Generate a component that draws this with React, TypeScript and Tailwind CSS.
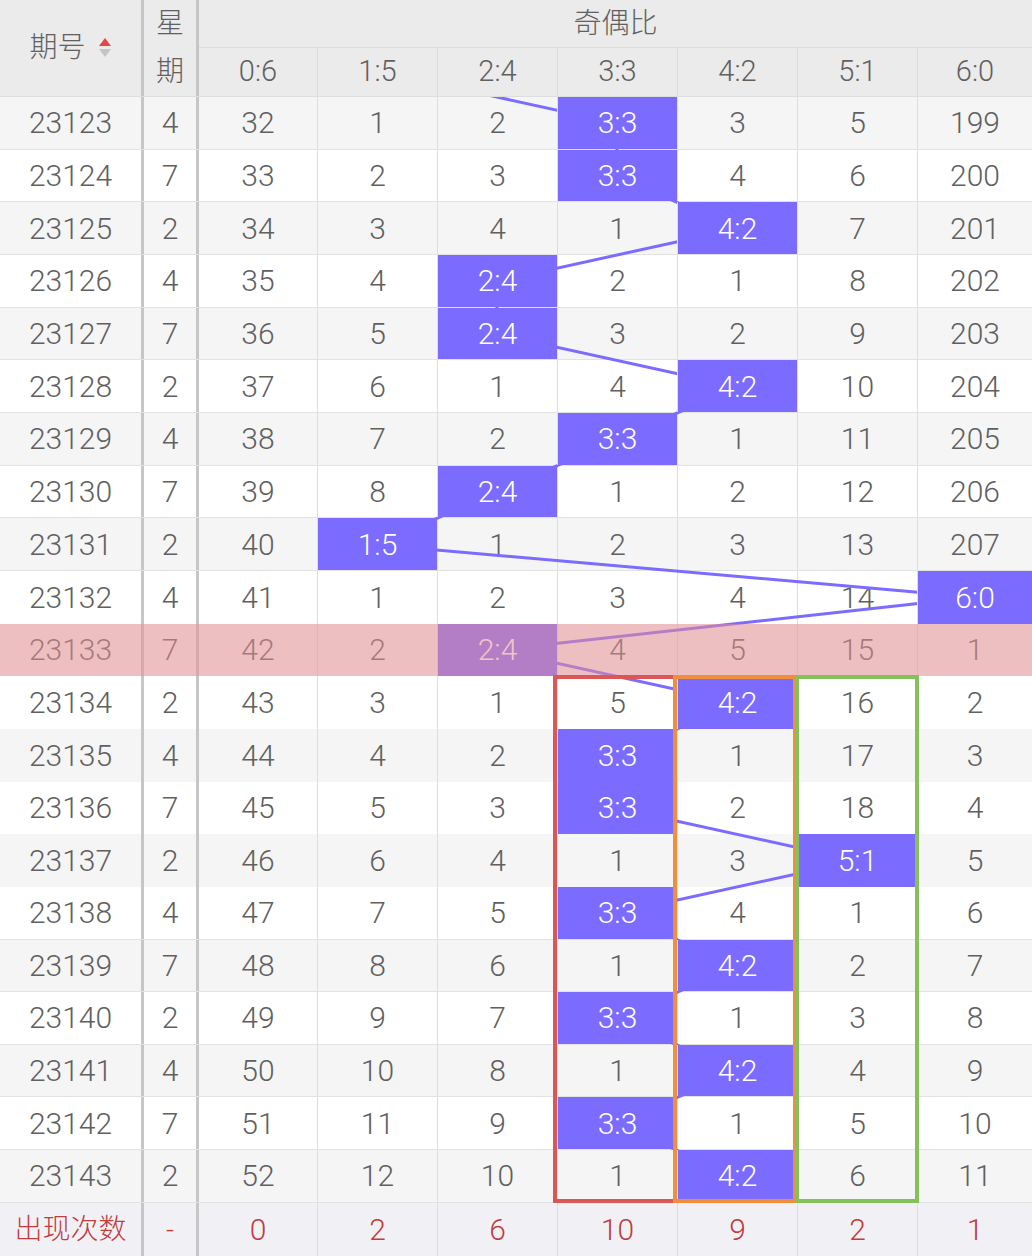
import React from 'react'

const RATIOS = ['0:6', '1:5', '2:4', '3:3', '4:2', '5:1', '6:0']
const COL_W = ['w-[118px]', 'w-[120px] border-l', 'w-[120px] border-l', 'w-[120px] border-l', 'w-[120px] border-l', 'w-[120px] border-l', 'w-[115px] border-l']
const CENTERS = [258, 377, 497, 617, 737, 857, 974.5]
const ROW_H = 1106 / 21

// [period, weekday, hit column, values]
const ROWS: [number, number, number, number[]][] = [
  [23123, 4, 3, [32, 1, 2, 0, 3, 5, 199]],
  [23124, 7, 3, [33, 2, 3, 0, 4, 6, 200]],
  [23125, 2, 4, [34, 3, 4, 1, 0, 7, 201]],
  [23126, 4, 2, [35, 4, 0, 2, 1, 8, 202]],
  [23127, 7, 2, [36, 5, 0, 3, 2, 9, 203]],
  [23128, 2, 4, [37, 6, 1, 4, 0, 10, 204]],
  [23129, 4, 3, [38, 7, 2, 0, 1, 11, 205]],
  [23130, 7, 2, [39, 8, 0, 1, 2, 12, 206]],
  [23131, 2, 1, [40, 0, 1, 2, 3, 13, 207]],
  [23132, 4, 6, [41, 1, 2, 3, 4, 14, 0]],
  [23133, 7, 2, [42, 2, 0, 4, 5, 15, 1]],
  [23134, 2, 4, [43, 3, 1, 5, 0, 16, 2]],
  [23135, 4, 3, [44, 4, 2, 0, 1, 17, 3]],
  [23136, 7, 3, [45, 5, 3, 0, 2, 18, 4]],
  [23137, 2, 5, [46, 6, 4, 1, 3, 0, 5]],
  [23138, 4, 3, [47, 7, 5, 0, 4, 1, 6]],
  [23139, 7, 4, [48, 8, 6, 1, 0, 2, 7]],
  [23140, 2, 3, [49, 9, 7, 0, 1, 3, 8]],
  [23141, 4, 4, [50, 10, 8, 1, 0, 4, 9]],
  [23142, 7, 3, [51, 11, 9, 0, 1, 5, 10]],
  [23143, 2, 4, [52, 12, 10, 1, 0, 6, 11]],
]

const TOTALS = [0, 2, 6, 10, 9, 2, 1]

function SortIcon() {
  return (
    <svg width="14" height="22" viewBox="0 0 14 22" className="ml-3">
      <polygon points="7,1 13,9 1,9" fill="#e84545" />
      <polygon points="1,12 13,12 7,20" fill="#c4c4c4" />
    </svg>
  )
}

function TrendLines() {
  const pts = [`${CENTERS[1]},${-ROW_H / 2}`]
  ROWS.forEach(([, , hit], i) => pts.push(`${CENTERS[hit]},${ROW_H / 2 + i * ROW_H}`))
  return (
    <svg className="absolute left-0 top-0 z-10 pointer-events-none" width="1032" height="1106" viewBox="0 0 1032 1106">
      <polyline points={pts.join(' ')} fill="none" stroke="#7b6bff" strokeWidth="3" />
    </svg>
  )
}

export default function App() {
  return (
    <div className="w-[1032px] h-[1256px] overflow-hidden bg-white text-[#606060]" style={{ fontFamily: 'Roboto, "Noto Sans CJK SC", sans-serif' }}>
      {/* Header */}
      <div className="flex h-[97px] bg-[#ebebeb] border-b border-[#dedede]">
        <div className="w-[144px] border-r-[3px] border-[#c6c6c6] flex items-center justify-center text-[28px]">
          <span className="font-light">期号</span>
          <SortIcon />
        </div>
        <div className="w-[55px] border-r-[3px] border-[#c6c6c6] flex flex-col text-[28px] font-light">
          <div className="h-[48px] flex items-center justify-center">星</div>
          <div className="flex-1 flex items-center justify-center">期</div>
        </div>
        <div className="flex-1 flex flex-col">
          <div className="h-[48px] border-b border-[#dcdcdc] flex items-center justify-center text-[28px] font-light">奇偶比</div>
          <div className="flex flex-1">
            {RATIOS.map((r, j) => (
              <div key={r} className={`${COL_W[j]} border-[#dcdcdc] flex items-center justify-center text-[29px] font-light`}>{r}</div>
            ))}
          </div>
        </div>
      </div>

      {/* Body */}
      <div className="relative h-[1106px]">
        {ROWS.map(([id, wk, hit, vals], i) => {
          const ruled = id <= 23131 || id >= 23138
          return (
            <div
              key={id}
              className={`relative flex h-[52.667px] ${i % 2 === 0 ? 'bg-[#f5f5f5]' : 'bg-white'} ${ruled ? 'border-b border-[#e2e2e2]' : ''}`}
            >
              <div className="w-[144px] border-r-[3px] border-[#c6c6c6] flex items-center justify-center text-[30px] font-light">{id}</div>
              <div className="w-[55px] border-r-[3px] border-[#c6c6c6] flex items-center justify-center text-[30px] font-light">{wk}</div>
              {vals.map((v, j) =>
                j === hit ? (
                  <div key={j} className={`${COL_W[j]} border-[#dedede] bg-clip-padding relative z-20 bg-[#7b6bff] text-white flex items-center justify-center text-[30px] font-light`}>
                    {RATIOS[j]}
                  </div>
                ) : (
                  <div key={j} className={`${COL_W[j]} border-[#dedede] flex items-center justify-center text-[30px] font-light`}>{v}</div>
                )
              )}
              {id === 23133 && <div className="absolute inset-0 z-30 bg-[rgba(231,144,148,0.53)]" />}
            </div>
          )
        })}

        <TrendLines />

        {/* highlight boxes */}
        <div className="absolute left-[553px] top-[578px] w-[124px] h-[528px] border-4 border-[#dd5656] z-40" />
        <div className="absolute left-[673px] top-[578px] w-[124px] h-[528px] border-4 border-[#ef8e3d] z-40" />
        <div className="absolute left-[795px] top-[578px] w-[124px] h-[528px] border-4 border-[#84c15a] z-40" />
      </div>

      {/* Footer */}
      <div className="flex h-[53px] bg-[#f1f1f5] text-[#c23b3d] text-[28px] font-light">
        <div className="w-[144px] border-r-[3px] border-[#c6c6c6] flex items-center justify-center">出现次数</div>
        <div className="w-[55px] border-r-[3px] border-[#c6c6c6] flex items-center justify-center">-</div>
        {TOTALS.map((t, j) => (
          <div key={j} className={`${COL_W[j]} border-[#dedede] flex items-center justify-center text-[30px]`}>{t}</div>
        ))}
      </div>
    </div>
  )
}
